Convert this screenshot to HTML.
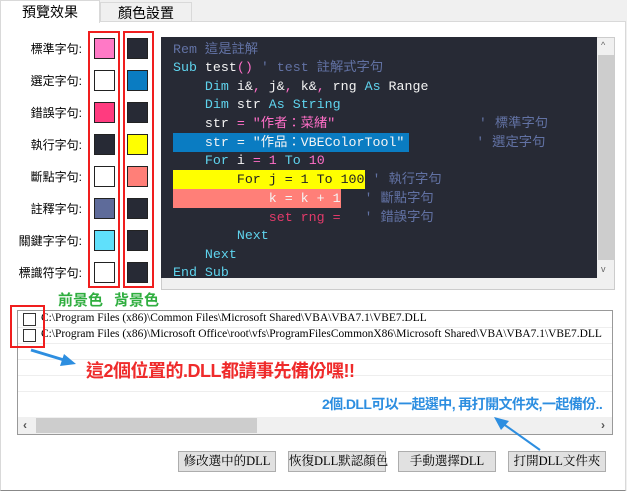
<!DOCTYPE html>
<html><head><meta charset="utf-8"><style>
*{margin:0;padding:0;box-sizing:border-box}
body{width:627px;height:491px;background:#f0f0f0;position:relative;overflow:hidden;font-family:"Liberation Sans","Noto Sans CJK TC",sans-serif}
.abs{position:absolute}
.panel{left:0;top:21px;width:626px;height:470px;background:#fff;border:1px solid #d9d9d9;border-bottom:1px solid #888}
.tab1{left:0;top:0;width:100px;height:23px;background:#fff;border:1px solid #d9d9d9;border-bottom:none;font-size:14px;text-align:center;line-height:22px;z-index:2}
.tab2{left:100px;top:2px;width:92px;height:20px;background:#f0f0f0;border:1px solid #d9d9d9;font-size:14px;text-align:center;line-height:20px}
.lbl{left:0;width:82px;text-align:right;font-size:12px;color:#000}
.sw{width:21px;height:21px;border:1px solid #222}
.red{border:2px solid #f01e1e}
.ed{left:161px;top:37px;width:454px;height:253px;background:#f0f0f0;border:1px solid #ccc}
.code{left:161px;top:37px;width:436px;height:241px;background:#272a35;font-family:"Liberation Mono","Noto Sans CJK TC",monospace;font-size:13.3px;color:#f4f4f4}
.ln{position:absolute;left:12px;white-space:pre;height:19px;line-height:19px}
.k{color:#5fd4ee}.s{color:#ff6ec7}.c{color:#6272a4}.e{color:#e23a6a}
.band{position:absolute;left:12px;height:19px}
.btn{top:451px;height:21px;width:98px;background:#e1e1e1;border:1px solid #adadad;font-size:12.5px;text-align:center;line-height:19px;white-space:nowrap;font-family:"Liberation Serif","Noto Serif CJK SC",serif}
.path{font-family:"Liberation Serif","Noto Serif CJK SC",serif;font-size:11.45px;white-space:nowrap}
.cb{width:13px;height:13px;border:1px solid #333;background:#fff}
</style></head><body>
<div class="abs panel"></div>
<div class="abs tab1">預覽效果</div>
<div class="abs tab2">顏色設置</div>

<div class="abs lbl" style="top:40px">標準字句:</div>
<div class="abs lbl" style="top:72px">選定字句:</div>
<div class="abs lbl" style="top:104px">錯誤字句:</div>
<div class="abs lbl" style="top:136px">執行字句:</div>
<div class="abs lbl" style="top:168px">斷點字句:</div>
<div class="abs lbl" style="top:200px">註釋字句:</div>
<div class="abs lbl" style="top:232px">關鍵字字句:</div>
<div class="abs lbl" style="top:264px">標識符字句:</div>

<div class="abs sw" style="left:94px;top:38px;background:#ff79c6"></div>
<div class="abs sw" style="left:94px;top:70px;background:#fff"></div>
<div class="abs sw" style="left:94px;top:102px;background:#ff3b7f"></div>
<div class="abs sw" style="left:94px;top:134px;background:#272a35"></div>
<div class="abs sw" style="left:94px;top:166px;background:#fff"></div>
<div class="abs sw" style="left:94px;top:198px;background:#5e6b9a"></div>
<div class="abs sw" style="left:94px;top:230px;background:#5fe0fb"></div>
<div class="abs sw" style="left:94px;top:262px;background:#fff"></div>
<div class="abs sw" style="left:127px;top:38px;background:#272a35"></div>
<div class="abs sw" style="left:127px;top:70px;background:#0a7cc2"></div>
<div class="abs sw" style="left:127px;top:102px;background:#272a35"></div>
<div class="abs sw" style="left:127px;top:134px;background:#ffff00"></div>
<div class="abs sw" style="left:127px;top:166px;background:#ff7f78"></div>
<div class="abs sw" style="left:127px;top:198px;background:#272a35"></div>
<div class="abs sw" style="left:127px;top:230px;background:#272a35"></div>
<div class="abs sw" style="left:127px;top:262px;background:#272a35"></div>
<div class="abs red" style="left:88px;top:31px;width:32px;height:257px"></div>
<div class="abs red" style="left:123px;top:31px;width:31px;height:257px"></div>

<div class="abs ed"></div>
<div class="abs" style="left:598px;top:55px;width:16px;height:205px;background:#cdcdcd"></div>
<div class="abs" style="left:601px;top:40px;font-size:9px;color:#666">^</div>
<div class="abs" style="left:601px;top:264px;font-size:9px;color:#666">v</div>
<div class="abs code">
<div class="band" style="top:96px;width:236px;background:#0a7cc2"></div>
<div class="band" style="top:133px;width:192px;background:#ffff00"></div>
<div class="band" style="top:152px;width:168px;background:#ff7f78"></div>
<div class="ln c" style="top:3px">Rem 這是註解</div>
<div class="ln" style="top:21px"><span class="k">Sub</span> test<span class="s">()</span> <span class="c">' test 註解式字句</span></div>
<div class="ln" style="top:40px">    <span class="k">Dim</span> i&amp;<span class="s">,</span> j&amp;<span class="s">,</span> k&amp;<span class="s">,</span> rng <span class="k">As</span> Range</div>
<div class="ln" style="top:58px">    <span class="k">Dim</span> str <span class="k">As String</span></div>
<div class="ln" style="top:77px">    str <span class="s">= "作者：菜緒"</span>                  <span class="c">' 標準字句</span></div>
<div class="ln" style="top:96px">    str = "作品：VBEColorTool"         <span class="c">' 選定字句</span></div>
<div class="ln" style="top:114px">    <span class="k">For</span> i <span class="s">= 1</span> <span class="k">To</span> <span class="s">10</span></div>
<div class="ln" style="top:133px;color:#222">        For j = 1 To 100 <span class="c">' 執行字句</span></div>
<div class="ln" style="top:152px">            k = k + 1   <span class="c">' 斷點字句</span></div>
<div class="ln e" style="top:171px">            set rng =   <span class="c">' 錯誤字句</span></div>
<div class="ln k" style="top:189px">        Next</div>
<div class="ln k" style="top:208px">    Next</div>
<div class="ln k" style="top:226px">End Sub</div>
</div>

<div class="abs" style="left:58px;top:289px;font-size:15px;font-weight:bold;color:#2fae3f">前景色</div>
<div class="abs" style="left:114px;top:289px;font-size:15px;font-weight:bold;color:#2fae3f">背景色</div>

<div class="abs" style="left:17px;top:310px;width:596px;height:125px;background:#fff;border:1px solid #999"></div>
<div class="abs" style="left:18px;top:327px;width:594px;border-top:1px solid #eee"></div>
<div class="abs" style="left:18px;top:343px;width:594px;border-top:1px solid #eee"></div>
<div class="abs" style="left:18px;top:359px;width:594px;border-top:1px solid #eee"></div>
<div class="abs" style="left:18px;top:375px;width:594px;border-top:1px solid #eee"></div>
<div class="abs" style="left:18px;top:391px;width:594px;border-top:1px solid #eee"></div>
<div class="abs" style="left:18px;top:417px;width:594px;height:17px;background:#f0f0f0"></div>
<div class="abs" style="left:36px;top:418px;width:221px;height:15px;background:#cdcdcd"></div>
<div class="abs" style="left:23px;top:418px;font-size:12px;color:#555;font-weight:bold">‹</div>
<div class="abs" style="left:601px;top:418px;font-size:12px;color:#555;font-weight:bold">›</div>
<div class="abs cb" style="left:23px;top:313px"></div>
<div class="abs cb" style="left:23px;top:329px"></div>
<div class="abs path" style="left:41px;top:312px">C:\Program Files (x86)\Common Files\Microsoft Shared\VBA\VBA7.1\VBE7.DLL</div>
<div class="abs path" style="left:41px;top:328px">C:\Program Files (x86)\Microsoft Office\root\vfs\ProgramFilesCommonX86\Microsoft Shared\VBA\VBA7.1\VBE7.DLL</div>
<div class="abs red" style="left:10px;top:305px;width:35px;height:43px"></div>

<svg class="abs" style="left:0;top:0" width="627" height="491">
<path d="M31 350 L64 360" stroke="#2d8ee0" stroke-width="3"/>
<polygon points="76,364 60,366 64,354" fill="#2d8ee0"/>
<path d="M540 450 L502 423" stroke="#2d8ee0" stroke-width="2"/>
<polygon points="494,417 509,421 501,430" fill="#2d8ee0"/>
</svg>
<div class="abs" style="left:86px;top:357px;font-size:18px;font-weight:bold;color:#ef2b2b;letter-spacing:-0.5px;white-space:nowrap">這2個位置的.DLL都請事先備份嘿!!</div>
<div class="abs" style="left:322px;top:394px;font-size:14px;font-weight:bold;color:#2d8ee0;letter-spacing:-0.6px;white-space:nowrap">2個.DLL可以一起選中, 再打開文件夾,一起備份..</div>

<div class="abs btn" style="left:178px">修改選中的DLL</div>
<div class="abs btn" style="left:288px">恢復DLL默認顏色</div>
<div class="abs btn" style="left:398px">手動選擇DLL</div>
<div class="abs btn" style="left:508px">打開DLL文件夾</div>
</body></html>
